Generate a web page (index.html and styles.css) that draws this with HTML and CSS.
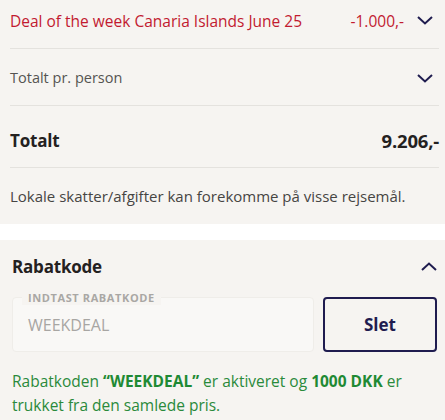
FILE: index.html
```html
<!DOCTYPE html>
<html lang="da">
<head>
<meta charset="utf-8">
<link rel="stylesheet" href="styles.css">
</head>
<body>
<div class="summary">
  <div class="row row-deal">
    <span class="label deal">Deal of the week Canaria Islands June 25</span>
    <span class="amount deal">-1.000,-</span>
    <svg class="chev" viewBox="0 0 16 9" width="16" height="9"><path d="M1 1l7 6.5L15 1" fill="none" stroke="#1f1c4f" stroke-width="2"/></svg>
  </div>
  <div class="row row-person">
    <span class="label muted">Totalt pr. person</span>
    <svg class="chev" viewBox="0 0 16 9" width="16" height="9"><path d="M1 1l7 6.5L15 1" fill="none" stroke="#1f1c4f" stroke-width="2"/></svg>
  </div>
  <div class="row row-total">
    <span class="label strong">Totalt</span>
    <span class="amount strong big">9.206,-</span>
  </div>
  <div class="note">Lokale skatter/afgifter kan forekomme på visse rejsemål.</div>
</div>
<div class="spacer"></div>
<div class="discount">
  <div class="discount-head">
    <span class="strong">Rabatkode</span>
    <svg class="chev-up" viewBox="0 0 16 9" width="16" height="9"><path d="M1 8L8 1.5 15 8" fill="none" stroke="#1f1c4f" stroke-width="2"/></svg>
  </div>
  <div class="discount-form">
    <div class="field">
      <span class="field-label">INDTAST RABATKODE</span>
      <span class="field-value">WEEKDEAL</span>
    </div>
    <button class="btn">Slet</button>
  </div>
  <p class="success">Rabatkoden <b>“WEEKDEAL”</b> er aktiveret og <b>1000 DKK</b> er trukket fra den samlede pris.</p>
</div>
</body>
</html>
```
FILE: styles.css
```css
html, body {
  margin: 0;
  padding: 0;
  background: #f6f4f1;
  font-family: "Open Sans", "Liberation Sans", sans-serif;
}
.summary {
  padding: 0 6px 0 10px;
}
.row {
  display: flex;
  align-items: center;
  border-bottom: 1px solid #e4e2de;
  box-sizing: border-box;
}
.row-deal {
  height: 49px;
  padding-bottom: 7px;
}
.row-person {
  height: 57px;
}
.row-total {
  height: 62px;
  padding-top: 8px;
}
.label {
  flex: 1;
  font-size: 15px;
}
.row-deal .label {
  font-size: 15.5px;
}
.deal {
  color: #c21a30;
}
.muted {
  color: #555452;
  font-size: 14.5px;
}
.amount {
  font-size: 15.5px;
}
.row-deal .amount {
  margin-right: 13px;
}
.chev {
  margin-right: 6px;
  display: block;
}
.row-person .chev {
  margin-top: 2px;
}
.strong {
  font-weight: 700;
  font-size: 17px;
  color: #24211f;
  letter-spacing: -0.2px;
}
.big {
  font-size: 18.5px;
}
.note {
  height: 56px;
  display: flex;
  align-items: center;
  font-size: 15px;
  color: #464543;
}
.spacer {
  height: 16px;
  background: #ffffff;
}
.discount {
  padding: 0 8px 0 12px;
}
.discount-head {
  height: 53px;
  display: flex;
  align-items: center;
  justify-content: space-between;
}
.chev-up {
  display: block;
  margin-right: 0;
}
.discount-form {
  display: flex;
  gap: 9px;
  height: 55px;
  margin-top: 4px;
}
.field {
  position: relative;
  flex: 1;
  background: #f9f8f6;
  border: 1px solid #efede9;
  border-radius: 4px;
  display: flex;
  align-items: center;
  padding-left: 15px;
}
.field-label {
  position: absolute;
  left: 9px;
  top: -8px;
  padding: 0 6px;
  background: #f6f4f1;
  font-size: 11px;
  font-weight: 700;
  color: #a9a7a4;
  letter-spacing: 0.6px;
}
.field-value {
  font-size: 16px;
  color: #a8a6a3;
}
.btn {
  width: 114px;
  border: 2px solid #1f1c4f;
  border-radius: 4px;
  background: transparent;
  font-family: inherit;
  font-size: 17px;
  font-weight: 700;
  color: #1f1c4f;
}
.success {
  margin: 17px 0 0 0;
  font-size: 15.5px;
  line-height: 24px;
  color: #2a8a3b;
}
.success b {
  font-weight: 700;
  color: #1f8a34;
}
```
